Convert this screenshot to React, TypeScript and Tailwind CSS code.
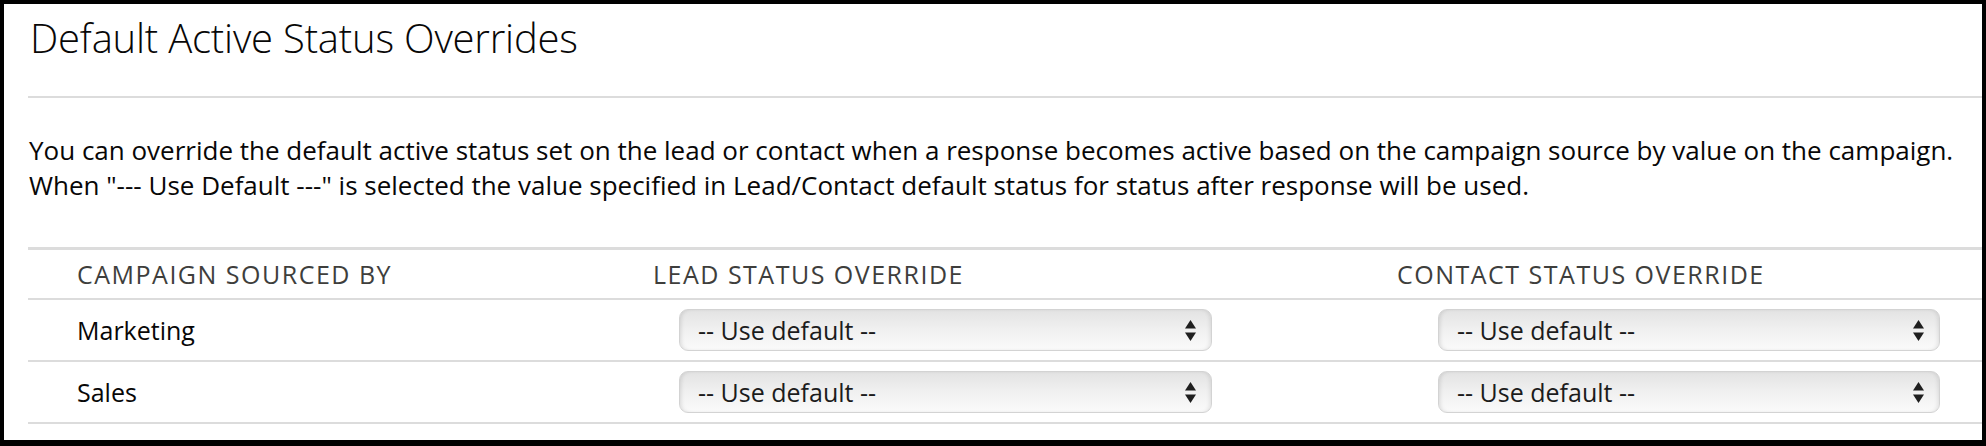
import React from 'react';

const rows = ['Marketing', 'Sales'];

const SelectArrows = () => (
    <svg width="11" height="21" viewBox="0 0 11 21" className="shrink-0">
        <path d="M0 8.5 L5.5 0 L11 8.5 Z" fill="#1f1f1f" />
        <path d="M0 12.5 L11 12.5 L5.5 21 Z" fill="#1f1f1f" />
    </svg>
);

const FakeSelect = ({ width }: { width: string }) => (
    <div
        className={`${width} h-[42px] flex items-center justify-between pl-[18px] pr-[15px] rounded-[9px] border border-[#d3d3d3] bg-[linear-gradient(180deg,#e3e3e3_0%,#efefef_45%,#fafafa_100%)] shadow-[inset_3px_0_4px_-2px_rgba(0,0,0,0.12),inset_-3px_0_4px_-2px_rgba(0,0,0,0.1)]`}
    >
        <span className="text-[25px] leading-[25px] text-[#1c1c1c]">-- Use default --</span>
        <SelectArrows />
    </div>
);

export default function App() {
    return (
        <div className="w-[1986px] h-[446px] bg-white border-4 border-b-[6px] border-black font-['Open_Sans',sans-serif] overflow-hidden">
            <div className="pl-[24px]">
                {/* Title */}
                <div className="pt-[10px] h-[92px]">
                    <h1 className="pl-[2px] text-[40px] leading-[48px] font-light text-[#080707] tracking-[-0.2px]">
                        Default Active Status Overrides
                    </h1>
                </div>
                <div className="h-[2px] bg-[#dcdcdc]" />

                {/* Description */}
                <div className="pt-[35px] h-[149px] pl-[1px] text-[26px] leading-[35px] text-[#080707]">
                    <p className="whitespace-nowrap">
                        You can override the default active status set on the lead or contact when a response becomes active based on the campaign source by value on the campaign.
                    </p>
                    <p className="whitespace-nowrap">
                        When "--- Use Default ---" is selected the value specified in Lead/Contact default status for status after response will be used.
                    </p>
                </div>

                {/* Table */}
                <div className="h-[3px] bg-[#dcdcdc]" />
                <div className="grid grid-cols-[625px_744px_1fr] h-[48px] items-center text-[25px] leading-[25px] tracking-[1.5px] text-[#3e3e3c]">
                    <div className="pl-[49px]">CAMPAIGN SOURCED BY</div>
                    <div>LEAD STATUS OVERRIDE</div>
                    <div>CONTACT STATUS OVERRIDE</div>
                </div>
                <div className="h-[2px] bg-[#dcdcdc]" />
                {rows.map((r) => (
                    <div key={r}>
                        <div className="grid grid-cols-[625px_744px_1fr] h-[60px] items-center">
                            <div className="pl-[49px] text-[25px] leading-[25px] text-[#080707]">{r}</div>
                            <div className="pl-[26px]">
                                <FakeSelect width="w-[533px]" />
                            </div>
                            <div className="pl-[41px]">
                                <FakeSelect width="w-[502px]" />
                            </div>
                        </div>
                        <div className="h-[2px] bg-[#dcdcdc]" />
                    </div>
                ))}
            </div>
        </div>
    );
}
